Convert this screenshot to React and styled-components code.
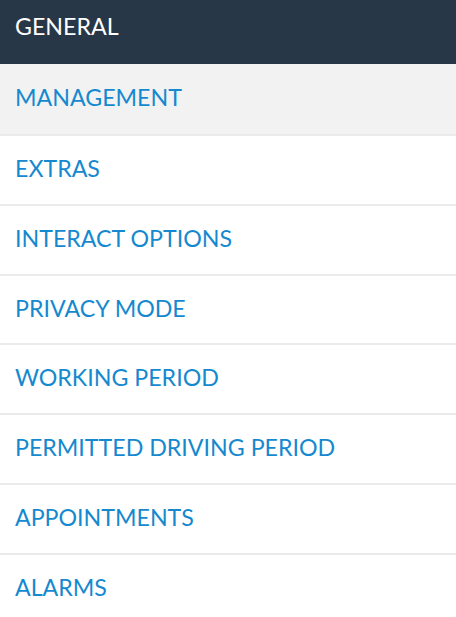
import React from "react";
import styled, { createGlobalStyle } from "styled-components";

const items = [
  "MANAGEMENT",
  "EXTRAS",
  "INTERACT OPTIONS",
  "PRIVACY MODE",
  "WORKING PERIOD",
  "PERMITTED DRIVING PERIOD",
  "APPOINTMENTS",
  "ALARMS",
];

function App() {
  return (
    <>
      <GlobalStyle />
      <Menu>
        <Header>GENERAL</Header>
        <List>
          {items.map((label, i) => (
            <Item key={label} active={i === 0}>
              {label}
            </Item>
          ))}
        </List>
      </Menu>
    </>
  );
}

const GlobalStyle = createGlobalStyle`
  body {
    margin: 0;
    background: #ffffff;
    font-family: "Lato", "Liberation Sans", sans-serif;
  }
`;

const Menu = styled.nav`
  display: flex;
  flex-direction: column;
  width: 456px;
`;

const Header = styled.div`
  box-sizing: border-box;
  height: 64px;
  padding: 13px 15px;
  background: #283747;
  color: #ffffff;
  font-size: 23.2px;
  line-height: 1.2;
`;

const List = styled.ul`
  list-style: none;
  margin: 0;
  padding: 0;
`;

const Item = styled.li`
  padding: 19px 15px 21px;
  border-bottom: 2px solid #ebebeb;
  background: ${(p) => (p.active ? "#f2f2f2" : "#ffffff")};
  color: #1589cf;
  font-size: 23.2px;
  line-height: 1.2;
  cursor: pointer;

  &:first-child {
    padding-top: 20px;
    padding-bottom: 22px;
  }

  &:last-child {
    border-bottom: none;
  }
`;

export default App;
